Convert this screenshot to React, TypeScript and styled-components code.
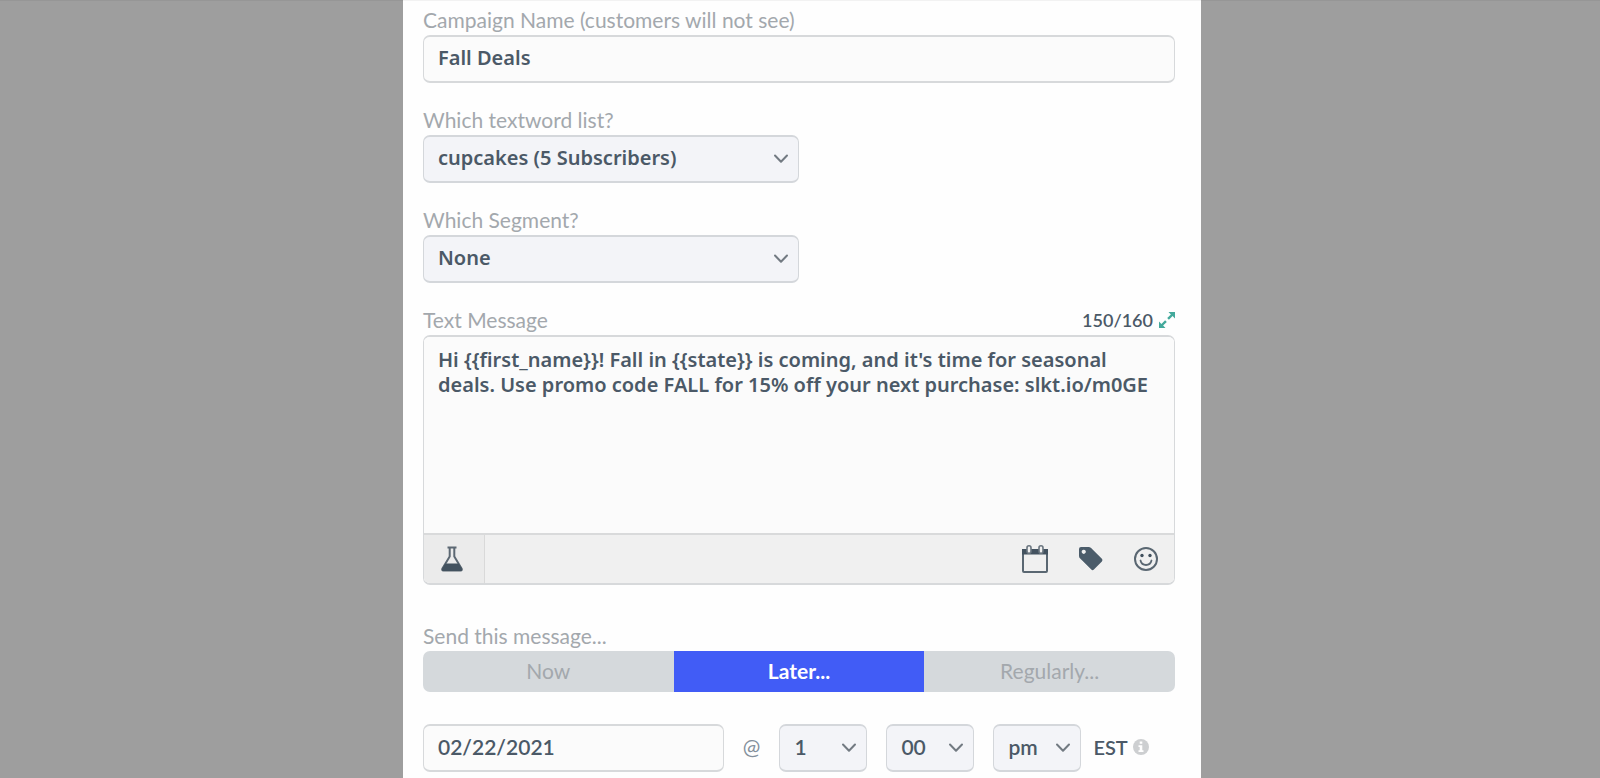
import React, { useState } from 'react';
import styled, { createGlobalStyle } from 'styled-components';

const ink = '#4b5967';
const labelFont = 'Lato, "Liberation Sans", sans-serif';
const valueFont = '"Noto Sans", "Open Sans", sans-serif';

const GlobalStyle = createGlobalStyle`
  *, *::before, *::after { box-sizing: border-box; }
  body { margin: 0; background: #9e9e9e; font-family: ${labelFont}; }
  button, input, select, textarea { font: inherit; color: inherit; margin: 0; }
`;

const Backdrop = styled.div`
  display: flex;
  justify-content: center;
  min-height: 100vh;
  padding-left: 4px;
  background: #9e9e9e;
  box-shadow: inset 0 1px 0 #969696;
`;

const Panel = styled.form`
  display: flex;
  flex-direction: column;
  width: 100%;
  max-width: 798px;
  padding: 6px 26px 0 20px;
  border-top: 1px solid #f2f2f2;
  background: #fefefe;
`;

const Field = styled.div<{ $half?: boolean; $gap?: number }>`
  display: flex;
  flex-direction: column;
  gap: 2px;
  width: ${(p) => (p.$half ? '50%' : '100%')};
  margin-bottom: ${(p) => p.$gap ?? 24}px;
`;

const FieldHead = styled.div`
  display: flex;
  align-items: center;
  justify-content: space-between;
`;

const Label = styled.label`
  color: #a3a8ad;
  font-size: 21px;
  line-height: 26px;
`;

const Counter = styled.div`
  display: flex;
  align-items: center;
  gap: 6px;
  color: ${ink};
  font-size: 18px;
  font-weight: 600;
  line-height: 26px;
`;

const IconButton = styled.button`
  display: flex;
  align-items: center;
  justify-content: center;
  padding: 0;
  border: 0;
  background: none;
  cursor: pointer;
`;

const TextInput = styled.input<{ $numeric?: boolean }>`
  width: 100%;
  height: 48px;
  padding: 0 14px 4px;
  border: solid #d7d9db;
  border-width: 2px 1px;
  border-radius: 7px;
  background: #fbfbfb;
  color: ${ink};
  font-family: ${(p) => (p.$numeric ? labelFont : valueFont)};
  font-size: ${(p) => (p.$numeric ? 21 : 20)}px;
  font-weight: 600;
`;

const SelectBox = styled.div`
  position: relative;
  width: 100%;
`;

const Select = styled.select<{ $numeric?: boolean }>`
  display: block;
  appearance: none;
  width: 100%;
  height: 48px;
  padding: 0 0 3px 14px;
  border: solid #d4d7db;
  border-width: 2px 1px;
  border-radius: 7px;
  background: #f3f4f8;
  color: ${ink};
  font-family: ${(p) => (p.$numeric ? labelFont : valueFont)};
  font-size: ${(p) => (p.$numeric ? 21 : 20)}px;
  font-weight: 600;
`;

const Chevron = styled.svg`
  position: absolute;
  top: 18px;
  right: 10px;
  pointer-events: none;
`;

const Editor = styled.div`
  display: flex;
  flex-direction: column;
  overflow: hidden;
  border: solid #d7d9db;
  border-width: 2px 1px;
  border-radius: 7px;
`;

const Message = styled.textarea`
  display: block;
  width: 100%;
  height: 196px;
  padding: 10px 14px;
  border: 0;
  resize: none;
  background: #fbfbfb;
  color: ${ink};
  font-family: ${valueFont};
  font-size: 20px;
  font-weight: 600;
  line-height: 25px;
`;

const EditorBar = styled.div`
  display: flex;
  align-items: stretch;
  justify-content: space-between;
  height: 50px;
  border-top: 2px solid #d9dadb;
  background: #f0f0f0;
`;

const TestButton = styled(IconButton)`
  width: 61px;
  padding-right: 5px;
  border-right: 1px solid #d9d9d9;
  background: #ebebeb;
`;

const Tools = styled.div`
  display: flex;
  align-items: center;
  gap: 29px;
  padding-right: 15px;
`;

const Segments = styled.div`
  display: grid;
  grid-template-columns: repeat(3, 1fr);
  overflow: hidden;
  border-radius: 7px;
`;

const Segment = styled.button<{ $active?: boolean }>`
  height: 41px;
  padding: 0 0 2px;
  border: 0;
  background: ${(p) => (p.$active ? '#415cf6' : '#d5d9dc')};
  color: ${(p) => (p.$active ? '#ffffff' : '#a3a8ad')};
  font-size: 21px;
  font-weight: ${(p) => (p.$active ? 700 : 400)};
  cursor: pointer;
`;

const Schedule = styled.div`
  display: grid;
  grid-template-columns: 40% auto auto auto auto 1fr;
  align-items: center;
  column-gap: 19px;
`;

const At = styled.span`
  padding-bottom: 3px;
  color: #84909c;
  font-size: 21px;
`;

const TimePart = styled.div`
  width: 88px;
`;

const Zone = styled.div`
  display: flex;
  align-items: center;
  gap: 5px;
  margin-left: -7px;
  padding-bottom: 2px;
  color: ${ink};
  font-size: 20px;
  font-weight: 600;
`;

type DropdownProps = {
  id?: string;
  label?: string;
  options: string[];
  numeric?: boolean;
};

function Dropdown({ id, label, options, numeric }: DropdownProps) {
  return (
    <SelectBox>
      <Select id={id} aria-label={label} $numeric={numeric}>
        {options.map((option) => (
          <option key={option}>{option}</option>
        ))}
      </Select>
      <Chevron width="16" height="12" viewBox="0 0 16 12" fill="none" aria-hidden="true">
        <path d="M2 2.500 8 8.700l6-6.200" stroke="#727a82" strokeWidth="2" strokeLinecap="round" strokeLinejoin="round" />
      </Chevron>
    </SelectBox>
  );
}

const FlaskIcon = () => (
  <svg width="24" height="26" viewBox="0 0 24 26" fill="none" aria-hidden="true">
    <path d="M7.500 1.500h9M9.700 2v8.500L2.300 22.800q-.5 1.700 1 1.700h17.400q1.500 0 1-1.700L14.300 10.500V2" stroke="#5c6873" strokeWidth="2" strokeLinejoin="round" />
    <path d="M5.200 17.500h13.600l3.300 5.500q.5 2-1.400 2H3.300q-1.900 0-1.400-2z" fill="#43525f" />
  </svg>
);

const CalendarIcon = () => (
  <svg width="28" height="30" viewBox="0 0 28 30" fill="none" aria-hidden="true">
    <rect x="2" y="6" width="24" height="22" rx="1" stroke="#5a6772" strokeWidth="2" />
    <path d="M1 5h26v5.500H1z" fill="#43525f" />
    <rect x="6" y="1.800" width="4" height="7.500" rx="2" fill="#f0f0f0" stroke="#6a757f" strokeWidth="1.600" />
    <rect x="18" y="1.800" width="4" height="7.500" rx="2" fill="#f0f0f0" stroke="#6a757f" strokeWidth="1.600" />
  </svg>
);

const TagIcon = () => (
  <svg width="26" height="26" viewBox="0 0 26 26" aria-hidden="true">
    <path d="M3 1h7.500q1.500 0 2.600 1l10.800 10.800q1.200 1.300 0 2.600l-8 8.200q-1.300 1.200-2.600 0L2.200 12.500Q1 11.500 1 10V3q0-2 2-2zm2.700 2.700a2.100 2.100 0 1 0 .1 0z" fill="#4b5c6a" fillRule="evenodd" />
  </svg>
);

const SmileIcon = () => (
  <svg width="26" height="26" viewBox="0 0 26 26" fill="none" aria-hidden="true">
    <circle cx="13" cy="13" r="11" stroke="#5a6772" strokeWidth="2" />
    <circle cx="9" cy="9.500" r="1.700" fill="#43525f" />
    <circle cx="17" cy="9.500" r="1.700" fill="#43525f" />
    <path d="M7.500 14.500c1.500 6 9.500 6 11 0" stroke="#5a6772" strokeWidth="1.800" strokeLinecap="round" />
  </svg>
);

const ExpandIcon = () => (
  <svg width="16" height="16" viewBox="0 0 16 16" fill="none" aria-hidden="true">
    <path d="M9.500 0H16v6.500l-2.400-2.400-3.700 3.700-1.700-1.700 3.700-3.700zM6.500 16H0V9.500l2.400 2.400 3.700-3.700 1.700 1.700-3.700 3.700z" fill="#43a99b" />
  </svg>
);

const InfoIcon = () => (
  <svg width="16" height="16" viewBox="0 0 16 16" aria-hidden="true">
    <circle cx="8" cy="8" r="8" fill="#cdcfd1" />
    <path d="M6.700 2.500h2.600v2.300H6.700zM5.500 6.200h3.800v5h1.200v1.800h-5v-1.800h1.200V8H5.500z" fill="#ffffff" />
  </svg>
);

const sendModes = ['Now', 'Later...', 'Regularly...'];

export default function App() {
  const [mode, setMode] = useState('Later...');

  return (
    <>
      <GlobalStyle />
      <Backdrop>
        <Panel onSubmit={(event) => event.preventDefault()}>
          <Field>
            <Label htmlFor="name">Campaign Name (customers will not see)</Label>
            <TextInput id="name" type="text" defaultValue="Fall Deals" />
          </Field>

          <Field $half>
            <Label htmlFor="list">Which textword list?</Label>
            <Dropdown id="list" options={['cupcakes (5 Subscribers)']} />
          </Field>

          <Field $half>
            <Label htmlFor="segment">Which Segment?</Label>
            <Dropdown id="segment" options={['None']} />
          </Field>

          <Field $gap={38}>
            <FieldHead>
              <Label htmlFor="message">Text Message</Label>
              <Counter>
                150/160
                <IconButton type="button" aria-label="Expand">
                  <ExpandIcon />
                </IconButton>
              </Counter>
            </FieldHead>
            <Editor>
              <Message
                id="message"
                spellCheck={false}
                defaultValue="Hi {{first_name}}! Fall in {{state}} is coming, and it's time for seasonal deals. Use promo code FALL for 15% off your next purchase: slkt.io/m0GE"
              />
              <EditorBar>
                <TestButton type="button" aria-label="Test message">
                  <FlaskIcon />
                </TestButton>
                <Tools>
                  <IconButton type="button" aria-label="Insert date">
                    <CalendarIcon />
                  </IconButton>
                  <IconButton type="button" aria-label="Insert tag">
                    <TagIcon />
                  </IconButton>
                  <IconButton type="button" aria-label="Insert emoji">
                    <SmileIcon />
                  </IconButton>
                </Tools>
              </EditorBar>
            </Editor>
          </Field>

          <Field $gap={32}>
            <Label as="div" id="send-label">Send this message...</Label>
            <Segments role="group" aria-labelledby="send-label">
              {sendModes.map((item) => (
                <Segment
                  key={item}
                  type="button"
                  $active={item === mode}
                  aria-pressed={item === mode}
                  onClick={() => setMode(item)}
                >
                  {item}
                </Segment>
              ))}
            </Segments>
          </Field>

          <Schedule>
            <TextInput $numeric type="text" aria-label="Date" defaultValue="02/22/2021" />
            <At>@</At>
            <TimePart>
              <Dropdown numeric label="Hour" options={['1']} />
            </TimePart>
            <TimePart>
              <Dropdown numeric label="Minute" options={['00']} />
            </TimePart>
            <TimePart>
              <Dropdown numeric label="AM or PM" options={['pm']} />
            </TimePart>
            <Zone>
              EST
              <InfoIcon />
            </Zone>
          </Schedule>
        </Panel>
      </Backdrop>
    </>
  );
}
